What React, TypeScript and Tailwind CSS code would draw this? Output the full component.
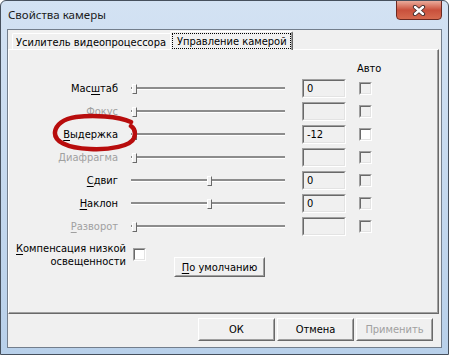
import React from "react";

type Ctl = { label: string; u: number; off?: boolean; val: string; mid?: boolean; white?: boolean };

const rows: Ctl[] = [
  { label: "Масштаб", u: 3, val: "0" },
  { label: "Фокус", u: -1, off: true, val: "" },
  { label: "Выдержка", u: 0, val: "-12", white: true },
  { label: "Диафрагма", u: -1, off: true, val: "" },
  { label: "Сдвиг", u: 0, val: "0", mid: true },
  { label: "Наклон", u: 0, val: "0", mid: true },
  { label: "Разворот", u: 0, off: true, val: "" },
];

const Mn = ({ text, u }: { text: string; u: number }) =>
  u < 0 ? (
    <>{text}</>
  ) : (
    <>
      {text.slice(0, u)}
      <span className="underline underline-offset-2">{text[u]}</span>
      {text.slice(u + 1)}
    </>
  );

// classic sunken 2px edge
const Sunken = ({ className, inner, children }: { className: string; inner: string; children?: React.ReactNode }) => (
  <div className={`border border-t-[#a0a0a0] border-l-[#a0a0a0] border-r-white border-b-white ${className}`}>
    <div className={`h-full border border-t-[#696969] border-l-[#696969] border-r-[#e3e3e3] border-b-[#e3e3e3] ${inner}`}>
      {children}
    </div>
  </div>
);

// classic raised button
const Btn = ({ children, className, off }: { children: React.ReactNode; className: string; off?: boolean }) => (
  <div className={`border border-t-white border-l-white border-r-[#696969] border-b-[#696969] ${className}`}>
    <div
      className={`h-full flex items-center justify-center border border-t-[#f0f0f0] border-l-[#f0f0f0] border-r-[#a0a0a0] border-b-[#a0a0a0] bg-[#f0f0f0] ${
        off ? "text-[#a0a0a0]" : "text-black"
      }`}
    >
      {children}
    </div>
  </div>
);

const Slider = ({ mid }: { mid?: boolean }) => (
  <div className="relative ml-[13px] w-[154px] h-[10px] flex items-center">
    <div className="w-full h-[2px] bg-[#8c8c8c] border-b border-white box-content" />
    <div
      className={`absolute top-0 ${
        mid ? "left-[76px]" : "left-[1px]"
      } w-[5px] h-[10px] border border-t-white border-l-white border-r-[#696969] border-b-[#696969] bg-[#f0f0f0]`}
    />
  </div>
);

const Row = ({ r }: { r: Ctl }) => (
  <div className="h-[23px] flex items-center">
    <div className={`w-[109px] text-right ${r.off ? "text-[#a0a0a0]" : "text-black"}`}>
      <Mn text={r.label} u={r.u} />
    </div>
    <Slider mid={r.mid} />
    <Sunken className="ml-[17px] w-[44px] h-[19px]" inner="bg-[#f0f0f0] pl-[3px] leading-[15px] text-black">
      {r.val}
    </Sunken>
    <Sunken className="ml-[13px] w-[13px] h-[13px]" inner={r.white ? "bg-white" : "bg-[#f0f0f0]"} />
  </div>
);

export default function App() {
  return (
    <div className="w-[449px] h-[355px] flex flex-col overflow-hidden border border-[#46505d] rounded-t-[6px] bg-gradient-to-b from-[#d3e2f3] to-[#b8d0ea] font-['DejaVu_Sans_Condensed','Liberation_Sans',Arial,sans-serif] text-[11px] leading-[13px]">
      {/* title bar */}
      <div className="h-[28px] flex shrink-0">
        <div className="pl-[7px] self-center font-['Noto_Sans',sans-serif] text-[11.5px] leading-[16px] text-[#1b1b1b]">
          Свойства камеры
        </div>
        <div className="ml-auto mr-[6px] -mt-[1px] w-[46px] h-[20px] rounded-b-[4px] border border-[#6d2a22] bg-gradient-to-b from-[#e9ab9b] via-[#c9503c] to-[#d66a4f] flex items-center justify-center">
          <svg width="14" height="11" viewBox="0 0 14 11">
            <path d="M3 2 L11 9 M11 2 L3 9" stroke="#3b2a2a" strokeWidth="4.2" strokeLinecap="round" />
            <path d="M3 2 L11 9 M11 2 L3 9" stroke="#ffffff" strokeWidth="2.4" strokeLinecap="round" />
          </svg>
        </div>
      </div>

      {/* frame body */}
      <div className="flex-1 px-[6px] pb-[6px] flex">
        <div className="relative flex-1 flex flex-col bg-[#f0f0f0] border border-[#737e8c]">
          {/* tabs */}
          <div className="h-[19px] flex items-end pl-[4px]">
            <div className="h-[16px] w-[158px] border-l border-t border-white rounded-tl-[2px] pl-[3px] pt-[2px] text-black whitespace-nowrap">
              Усилитель видеопроцессора
            </div>
            <div className="relative z-10 -mb-[1px] h-[19px] w-[123px] border-l border-t border-white border-r border-r-[#696969] rounded-t-[2px] bg-[#f0f0f0]">
              <div className="h-full border-r border-[#a0a0a0] pl-[1px] pt-[1px]">
                <div className="h-[16px] w-[119px] border border-dotted border-black pl-[4px] pt-[1px] text-black whitespace-nowrap">
                  Управление камерой
                </div>
              </div>
            </div>
          </div>

          {/* panel */}
          <div className="w-[431px] h-[265px] border-l border-t border-white border-r border-b border-r-[#696969] border-b-[#696969]">
            <div className="h-full border-r border-b border-[#a0a0a0] flex flex-col">
              <div className="pt-[12px] pl-[348px] text-black">Авто</div>
              <div className="mt-[2px] flex flex-col">
                {rows.map((r) => (
                  <Row key={r.label} r={r} />
                ))}
              </div>
              <div className="mt-[4px] flex items-start">
                <div className="w-[117px] text-right text-black whitespace-nowrap">
                  <Mn text="Компенсация низкой" u={0} />
                  <br />
                  освещенности
                </div>
                <Sunken className="ml-[7px] mt-[6px] w-[13px] h-[13px]" inner="bg-white" />
                <Btn className="ml-[28px] mt-[15px] w-[91px] h-[20px]">
                  <Mn text="По умолчанию" u={0} />
                </Btn>
              </div>
            </div>
          </div>

          {/* dialog buttons */}
          <div className="mt-[4px] flex justify-end gap-[2px] pr-[8px]">
            <Btn className="w-[77px] h-[23px]">ОК</Btn>
            <Btn className="w-[77px] h-[23px]">Отмена</Btn>
            <Btn className="w-[77px] h-[23px]" off>
              Применить
            </Btn>
          </div>

          {/* red hand-drawn mark around "Выдержка" */}
          <svg className="absolute left-[40px] top-[81px] pointer-events-none" width="90" height="46" viewBox="0 0 90 46">
            <path
              d="M83 11 C70 5 45 4 28 6 C15 8 8 14 7 21 C6 30 18 37 42 38 C62 39 83 35 86 27 C88 21 86 17 83 15"
              fill="none"
              stroke="#b80d0d"
              strokeWidth="4.5"
              strokeLinecap="round"
            />
          </svg>
        </div>
      </div>
    </div>
  );
}
